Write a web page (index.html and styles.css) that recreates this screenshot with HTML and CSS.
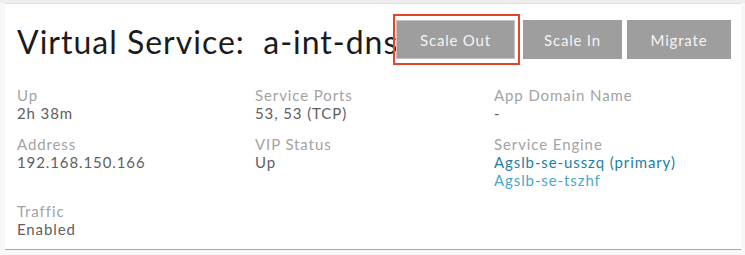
FILE: index.html
```html
<!DOCTYPE html>
<html lang="en">
<head>
	<meta charset="UTF-8">
	<title>Virtual Service</title>
	<link rel="stylesheet" href="styles.css">
</head>
<body>
    <div class="page_top"></div>
    <div class="card">
        <div class="header">
            <h1 class="title">Virtual Service:&nbsp; a-int-dns</h1>
            <div class="actions">
                <button class="btn focused">Scale Out</button>
                <button class="btn scale_in">Scale In</button>
                <button class="btn">Migrate</button>
            </div>
        </div>

        <div class="details">
            <div class="item">
                <div class="label">Up</div>
                <div class="value">2h 38m</div>
            </div>
            <div class="item">
                <div class="label">Service Ports</div>
                <div class="value">53, 53 (TCP)</div>
            </div>
            <div class="item">
                <div class="label">App Domain Name</div>
                <div class="value">-</div>
            </div>

            <div class="item">
                <div class="label">Address</div>
                <div class="value">192.168.150.166</div>
            </div>
            <div class="item">
                <div class="label">VIP Status</div>
                <div class="value">Up</div>
            </div>
            <div class="item">
                <div class="label">Service Engine</div>
                <a class="link primary">Agslb-se-usszq (primary)</a>
                <a class="link">Agslb-se-tszhf</a>
            </div>

            <div class="item">
                <div class="label">Traffic</div>
                <div class="value">Enabled</div>
            </div>
        </div>
    </div>
</body>
</html>
```

FILE: styles.css
```css
body{
    margin: 0;
    background: #f7f7f7;
    font-family: Lato, "Noto Sans", sans-serif;
}
.page_top{
    height: 3px;
    background: #eeeeee;
}
.card{
    width: 736px;
    height: 247px;
    margin-left: 5px;
    background: #fff;
    border-top: 1px solid #d4e3e6;
    border-bottom: 1px solid #a8a8a8;
    box-sizing: border-box;
    padding: 0 10px 0 12px;
}
.header{
    display: flex;
    align-items: flex-start;
    height: 64px;
}
.title{
    flex: 1;
    min-width: 0;
    overflow: hidden;
    white-space: nowrap;
    margin: 18px 0 0;
    font-size: 32px;
    font-weight: normal;
    letter-spacing: 1px;
    color: #1b1b1b;
    line-height: 40px;
}
.actions{
    display: flex;
    margin-top: 16px;
}
.btn{
    height: 39px;
    border: 1px solid #9e9e9e;
    background: #9e9e9e;
    color: #f4f4f4;
    font-family: inherit;
    font-size: 15px;
    letter-spacing: 0.8px;
    padding: 0;
    margin-left: 8px;
}
.btn:first-child{
    margin-left: 0;
}
.btn.focused{
    width: 119px;
    border-color: #c4c4c4;
    position: relative;
}
.btn.focused::after{
    content: "";
    position: absolute;
    left: -4px;
    top: -7px;
    right: -6px;
    bottom: -7px;
    border: 2px solid #e6432f;
}
.btn.scale_in{
    width: 99px;
}
.btn:last-child{
    width: 104px;
    margin-left: 5px;
}
.details{
    display: grid;
    grid-template-columns: 238px 239px 1fr;
    row-gap: 13px;
    margin-top: 18px;
    font-size: 15px;
    letter-spacing: 0.9px;
    line-height: 18px;
}
.label{
    color: #a3a3a3;
}
.value{
    color: #606060;
}
.link{
    display: block;
    color: #4aa6cc;
}
.link.primary{
    color: #1f7ea5;
}
```
